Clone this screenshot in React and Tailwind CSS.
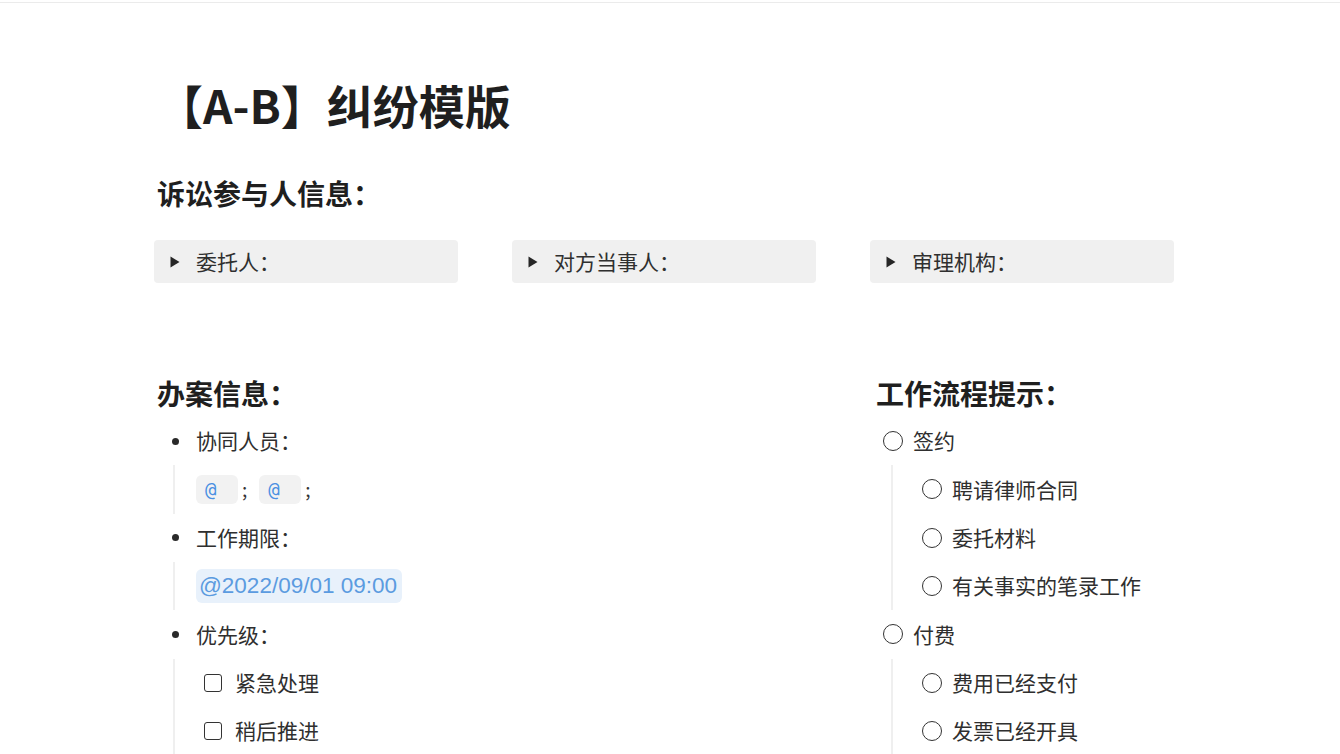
import React from "react";

const font = { fontFamily: '"Noto Sans CJK SC", "Noto Sans", sans-serif' };

function Toggle({ label }) {
	return (
		<div className="flex h-[43px] items-center rounded-[4px] bg-[#f0f0f0] pl-[16px]">
			{/* collapse arrow */}
			<svg width="10" height="12" viewBox="0 0 10 12" className="mr-[16px]">
				<path d="M0.5 0.5 L9.5 6 L0.5 11.5 Z" fill="#262626" />
			</svg>
			<span className="text-[21px] text-[#2f2f2f]">{label}</span>
		</div>
	);
}

function Bullet({ label, children }) {
	return (
		<div>
			<div className="flex h-[48.33px] items-center">
				<span className="flex w-[42px] justify-center">
					<span className="h-[7px] w-[7px] rounded-full bg-[#2a2a2a]"></span>
				</span>
				<span className="text-[21px] text-[#2f2f2f]">{label}</span>
			</div>
			<div className="ml-[19px] border-l-2 border-[#efefef] pl-[21px]">{children}</div>
		</div>
	);
}

function Mention() {
	return (
		<span className="inline-flex h-[29px] w-[42px] items-center rounded-[6px] bg-[#f2f2f2] pl-[9px] text-[19px] text-[#4a90e2]" style={{ fontFamily: '"DejaVu Sans Mono", monospace' }}>
			@
		</span>
	);
}

function Check({ label }) {
	return (
		<div className="flex h-[48.33px] items-center pl-[8px]">
			<span className="h-[18px] w-[18px] rounded-[3px] border-[1.5px] border-[#333]"></span>
			<span className="ml-[13px] text-[21px] text-[#2f2f2f]">{label}</span>
		</div>
	);
}

function Task({ label, nested }) {
	return (
		<div className={"flex h-[48.33px] items-center " + (nested ? "pl-[1px]" : "pl-[13px]")}>
			<span className="h-[20px] w-[20px] rounded-full border-[1.8px] border-[#333]"></span>
			<span className="ml-[10px] text-[21px] text-[#2f2f2f]">{label}</span>
		</div>
	);
}

function TaskGroup({ label, items }) {
	return (
		<div>
			<Task label={label} />
			<div className="ml-[21px] border-l-2 border-[#efefef] pl-[28px]">
				{items.map((t) => (
					<Task key={t} label={t} nested />
				))}
			</div>
		</div>
	);
}

export default function App() {
	return (
		<div className="h-[754px] w-[1340px] overflow-hidden bg-white" style={font}>
			{/* top border */}
			<div className="mt-[2px] h-[1px] bg-[#ebebeb]"></div>

			<div className="ml-[154px] w-[1020px]">
				{/* page title */}
				<h1 className="mt-[72px] flex h-[58px] items-center pl-[3px] text-[46px] font-bold text-[#1f1f1f]">【A-B】纠纷模版</h1>

				{/* participants */}
				<h2 className="mt-[40px] flex h-[40px] items-center pl-[3px] text-[28px] font-bold text-[#1f1f1f]">诉讼参与人信息：</h2>
				<div className="mt-[27px] grid grid-cols-3 gap-[54px]">
					<Toggle label="委托人：" />
					<Toggle label="对方当事人：" />
					<Toggle label="审理机构：" />
				</div>

				<div className="mt-[90px] flex">
					{/* case info */}
					<div className="w-[716px]">
						<h2 className="flex h-[40px] items-center pl-[3px] text-[28px] font-bold text-[#1f1f1f]">办案信息：</h2>
						<div className="mt-[4px]">
							<Bullet label="协同人员：">
								<div className="flex h-[48.33px] items-center">
									<Mention />
									<span className="ml-[4px] mr-[12px] text-[19px] text-[#333]">;</span>
									<Mention />
									<span className="ml-[4px] text-[19px] text-[#333]">;</span>
								</div>
							</Bullet>
							<Bullet label="工作期限：">
								<div className="flex h-[48.33px] items-center">
									<span className="inline-flex h-[34px] w-[206px] items-center rounded-[6px] bg-[#e8f1fb] pl-[3px] text-[22.5px] text-[#5b9be0]" style={{ fontFamily: '"Liberation Sans", Arial, sans-serif' }}>
										@2022/09/01 09:00
									</span>
								</div>
							</Bullet>
							<Bullet label="优先级：">
								<Check label="紧急处理" />
								<Check label="稍后推进" />
								<div className="h-[40px]"></div>
							</Bullet>
						</div>
					</div>

					{/* workflow */}
					<div className="flex-1">
						<h2 className="flex h-[40px] items-center pl-[6px] text-[28px] font-bold text-[#1f1f1f]">工作流程提示：</h2>
						<div className="mt-[4px]">
							<TaskGroup label="签约" items={["聘请律师合同", "委托材料", "有关事实的笔录工作"]} />
							<div>
								<Task label="付费" />
								<div className="ml-[21px] h-[140px] border-l-2 border-[#efefef] pl-[28px]">
									<Task label="费用已经支付" nested />
									<Task label="发票已经开具" nested />
								</div>
							</div>
						</div>
					</div>
				</div>
			</div>
		</div>
	);
}
